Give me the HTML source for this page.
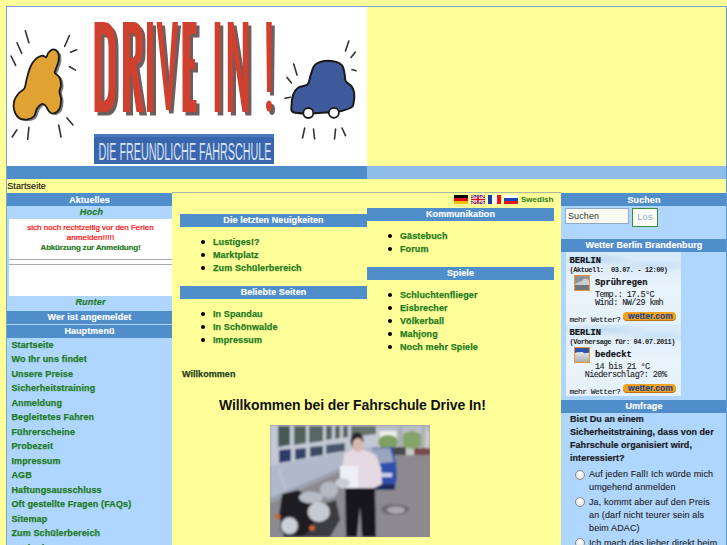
<!DOCTYPE html>
<html><head><meta charset="utf-8"><title>Fahrschule Drive In</title>
<style>
html,body{margin:0;padding:0;background:#ffff99;width:727px;height:545px;overflow:hidden;position:relative}
body>div,body>svg{position:absolute}
.t{white-space:pre}
</style></head><body>
<div style='left:7px;top:7px;width:360px;height:159px;background:#ffffff;'></div>
<svg style="left:0;top:0" width="727" height="180" viewBox="0 0 727 180">
<g stroke="#333" stroke-width="1.6" stroke-linecap="round" fill="none">
<path d="M11,56L15.7,65.3M17,42.7L21.7,53.4M25.3,30.7L28.9,42.7M69.4,35.5L64.7,46.3M70.6,52.2L76.6,49.8M69.4,66.5L75.4,70.1M67,117.9L73,125M58.7,125L61,137M28.9,127.4L27.7,139.3M16.9,129.8L12.2,137"/>
<path d="M293.7,64L297,75M287,77.4L291.5,82.9M285,98.3L290.4,97.2M348.8,41L345.5,51M355.4,52L351,57.5M352,69.6L356,70.7M304.7,128L302.5,138M313.5,129L314.6,139M335.6,129L334.5,139M342,128L345.5,135.7"/>
</g>
<path d="M53.3,49.4C54.9,49.4 57.1,50.7 58.0,52.5C58.9,54.3 59.1,57.4 58.7,60.3C58.3,63.2 56.2,67.6 55.6,69.7C55.0,71.8 54.1,71.5 54.8,72.8C55.4,74.1 58.5,75.4 59.5,77.5C60.5,79.6 61.0,83.0 61.0,85.3C61.0,87.6 59.5,89.2 59.5,91.5C59.5,93.8 61.0,96.4 61.0,99.3C61.0,102.2 60.7,106.3 59.5,108.7C58.3,111.1 55.7,112.9 54.0,113.4C52.3,113.9 50.8,113.1 49.4,111.8C48.0,110.5 46.8,106.9 45.5,105.6C44.2,104.3 43.0,103.5 41.6,104.0C40.2,104.5 38.2,106.6 36.9,108.7C35.6,110.8 35.5,114.7 33.8,116.5C32.1,118.3 29.2,119.3 26.7,119.6C24.2,119.8 21.0,119.6 18.9,118.0C16.8,116.4 15.0,113.0 14.2,110.2C13.4,107.4 13.4,103.8 14.2,100.9C15.0,98.0 17.2,95.1 18.9,93.0C20.6,90.9 23.1,90.7 24.4,88.4C25.7,86.1 25.7,82.7 26.7,79.0C27.7,75.3 29.0,69.9 30.6,66.5C32.2,63.1 34.2,60.5 36.1,58.7C38.0,56.9 40.6,55.9 42.3,55.6C44.0,55.4 45.2,57.7 46.2,57.2C47.2,56.7 47.4,53.8 48.6,52.5C49.8,51.2 51.7,49.4 53.3,49.4Z" fill="#7a7a7a" transform="translate(2.5,1.5)"/>
<path d="M53.3,49.4C54.9,49.4 57.1,50.7 58.0,52.5C58.9,54.3 59.1,57.4 58.7,60.3C58.3,63.2 56.2,67.6 55.6,69.7C55.0,71.8 54.1,71.5 54.8,72.8C55.4,74.1 58.5,75.4 59.5,77.5C60.5,79.6 61.0,83.0 61.0,85.3C61.0,87.6 59.5,89.2 59.5,91.5C59.5,93.8 61.0,96.4 61.0,99.3C61.0,102.2 60.7,106.3 59.5,108.7C58.3,111.1 55.7,112.9 54.0,113.4C52.3,113.9 50.8,113.1 49.4,111.8C48.0,110.5 46.8,106.9 45.5,105.6C44.2,104.3 43.0,103.5 41.6,104.0C40.2,104.5 38.2,106.6 36.9,108.7C35.6,110.8 35.5,114.7 33.8,116.5C32.1,118.3 29.2,119.3 26.7,119.6C24.2,119.8 21.0,119.6 18.9,118.0C16.8,116.4 15.0,113.0 14.2,110.2C13.4,107.4 13.4,103.8 14.2,100.9C15.0,98.0 17.2,95.1 18.9,93.0C20.6,90.9 23.1,90.7 24.4,88.4C25.7,86.1 25.7,82.7 26.7,79.0C27.7,75.3 29.0,69.9 30.6,66.5C32.2,63.1 34.2,60.5 36.1,58.7C38.0,56.9 40.6,55.9 42.3,55.6C44.0,55.4 45.2,57.7 46.2,57.2C47.2,56.7 47.4,53.8 48.6,52.5C49.8,51.2 51.7,49.4 53.3,49.4Z" fill="#e1a234" stroke="#1a1a1a" stroke-width="1.8"/>
<path d="M314.8,65.1C317.1,62.7 320.9,61.6 324.3,61.0C327.7,60.4 332.1,60.8 335.1,61.6C338.1,62.4 340.6,63.6 342.2,65.7C343.8,67.8 344.0,71.5 344.6,74.1C345.2,76.7 344.6,79.1 345.8,81.2C347.0,83.3 350.4,84.6 351.8,86.6C353.2,88.6 353.9,90.5 354.2,93.2C354.5,95.9 354.1,100.3 353.6,102.7C353.1,105.1 353.7,106.0 351.2,107.5C348.7,109.0 342.2,110.8 338.7,111.6C335.2,112.4 334.7,111.9 330.3,112.2C325.9,112.5 318.6,113.4 312.4,113.4C306.2,113.4 296.8,113.6 293.3,112.2C289.8,110.8 291.6,108.1 291.6,105.1C291.6,102.1 292.2,97.2 293.3,94.3C294.4,91.4 295.7,89.5 298.1,87.8C300.5,86.1 305.6,86.3 307.7,84.2C309.8,82.1 309.4,78.5 310.6,75.3C311.8,72.1 312.5,67.5 314.8,65.1Z" fill="#3f5a9a" stroke="#1a1a1a" stroke-width="2"/>
<circle cx="308.3" cy="113" r="5" fill="#fff" stroke="#1a1a1a" stroke-width="1.8"/>
<circle cx="333.9" cy="112.8" r="5" fill="#fff" stroke="#1a1a1a" stroke-width="1.8"/>
<defs><g id="drv" fill-rule="evenodd">
<path d="M94.5,22L104,22Q115.5,22 115.5,46L115.5,88Q115.5,112 104,112L94.5,112ZM101.5,34L103,34Q108.5,34 108.5,48L108.5,88Q108.5,101 103,101L101.5,101Z"/>
<path d="M123,22L133,22Q142.5,22 142.5,38L142.5,50Q142.5,62 136.5,65L144,112L136.5,112L131,74L130,74L130,112L123,112ZM130,33L131.5,33Q135.5,33 135.5,40L135.5,51Q135.5,58 131.5,58L130,58Z"/>
<path d="M147,22L153,22L153,112L147,112Z"/>
<path d="M156.5,22L162,22L168,92L172.5,22L178,22L170.5,110L166,110Z"/>
<path d="M182.5,22L196.5,22L196.5,34L190,34L190,59L195,59L195,69L190,69L190,100L196.5,100L196.5,112L182.5,112Z"/>
<path d="M214.7,22L220.3,22L220.3,112L214.7,112Z"/>
<path d="M227.8,22L233.5,22L242.8,80L242.8,22L248.4,22L248.4,112L242.5,112L233,50L233,112L227.8,112Z"/>
<path d="M266.2,22L271.8,22L271,92L267,92Z"/>
<ellipse cx="269" cy="106" rx="3" ry="5.5"/>
</g></defs>
<use href="#drv" transform="translate(3,3.5)" fill="#6e5e5e"/>
<use href="#drv" fill="#cf402f"/>
<rect x="94" y="134" width="180" height="30" fill="#3a66ae"/><rect x="94" y="134" width="180" height="3" fill="#4a78bc"/>
<text x="98.5" y="159.5" font-family="Liberation Sans" font-size="23" fill="#d8e4f0" textLength="173" lengthAdjust="spacingAndGlyphs">DIE FREUNDLICHE FAHRSCHULE</text>
</svg>

<div style='left:7px;top:166px;width:360px;height:13px;background:#4f8dcb;'></div>
<div style='left:367px;top:166px;width:359px;height:13px;background:#8dbde9;'></div>
<div class='t' style='left:7.3px;top:176px;font:normal normal 9px/20px "Liberation Sans";color:#151515;letter-spacing:0.05px;-webkit-text-stroke:0.15px #151515;'>Startseite</div>
<div style='left:172px;top:192px;width:389px;height:1px;background:#a8b8a8;'></div>
<div style='left:7px;top:193px;width:165px;height:352px;background:#afd6fe;'></div>
<div style='left:7px;top:193px;width:165px;height:13px;background:#4f8dcb;'></div>
<div class='t' style='left:7px;top:189.5px;font:normal bold 9px/20px "Liberation Sans";color:#ffffff;width:165px;text-align:center;letter-spacing:0.08px;-webkit-text-stroke:0.15px #fff;'>Aktuelles</div>
<div class='t' style='left:9px;top:202.2px;font:italic bold 9px/20px "Liberation Sans";color:#1e7b1e;width:165px;text-align:center;letter-spacing:0.3px;-webkit-text-stroke:0.2px #1e7b1e;'>Hoch</div>
<div style='left:9px;top:219px;width:163px;height:77px;background:#ffffff;'></div>
<div class='t' style='left:9px;top:217.5px;font:normal normal 8px/20px "Liberation Sans";color:#ff0000;width:163px;text-align:center;-webkit-text-stroke:0.2px #f00;'>sich noch rechtzeitig vor den Ferien</div>
<div class='t' style='left:9px;top:228px;font:normal normal 8px/20px "Liberation Sans";color:#ff0000;width:163px;text-align:center;letter-spacing:0.1px;-webkit-text-stroke:0.2px #f00;'>anmelden!!!!!</div>
<div class='t' style='left:9px;top:238px;font:normal bold 8px/20px "Liberation Sans";color:#1e7b1e;width:163px;text-align:center;letter-spacing:-0.2px;-webkit-text-stroke:0.2px #1e7b1e;'>Abkürzung zur Anmeldung!</div>
<div style='left:9px;top:259px;width:163px;height:1px;background:#ababab;'></div>
<div style='left:9px;top:264px;width:163px;height:1px;background:#ababab;'></div>
<div class='t' style='left:8px;top:292px;font:italic bold 9px/20px "Liberation Sans";color:#1e7b1e;width:165px;text-align:center;letter-spacing:0.2px;-webkit-text-stroke:0.2px #1e7b1e;'>Runter</div>
<div style='left:7px;top:311px;width:165px;height:13px;background:#4f8dcb;'></div>
<div class='t' style='left:7px;top:307px;font:normal bold 9px/20px "Liberation Sans";color:#ffffff;width:165px;text-align:center;letter-spacing:0.08px;-webkit-text-stroke:0.15px #fff;'>Wer ist angemeldet</div>
<div style='left:7px;top:325px;width:165px;height:13px;background:#4f8dcb;'></div>
<div class='t' style='left:7px;top:321px;font:normal bold 9px/20px "Liberation Sans";color:#ffffff;width:165px;text-align:center;letter-spacing:0.08px;-webkit-text-stroke:0.15px #fff;'>Hauptmenü</div>
<div class='t' style='left:11.5px;top:335px;font:normal bold 9px/20px "Liberation Sans";color:#1e7b1e;letter-spacing:0.12px;-webkit-text-stroke:0.25px #1e7b1e;'>Startseite</div>
<div class='t' style='left:11.5px;top:349px;font:normal bold 9px/20px "Liberation Sans";color:#1e7b1e;letter-spacing:0.12px;-webkit-text-stroke:0.25px #1e7b1e;'>Wo Ihr uns findet</div>
<div class='t' style='left:11.5px;top:364px;font:normal bold 9px/20px "Liberation Sans";color:#1e7b1e;letter-spacing:0.12px;-webkit-text-stroke:0.25px #1e7b1e;'>Unsere Preise</div>
<div class='t' style='left:11.5px;top:378px;font:normal bold 9px/20px "Liberation Sans";color:#1e7b1e;letter-spacing:0.12px;-webkit-text-stroke:0.25px #1e7b1e;'>Sicherheitstraining</div>
<div class='t' style='left:11.5px;top:393px;font:normal bold 9px/20px "Liberation Sans";color:#1e7b1e;letter-spacing:0.12px;-webkit-text-stroke:0.25px #1e7b1e;'>Anmeldung</div>
<div class='t' style='left:11.5px;top:407px;font:normal bold 9px/20px "Liberation Sans";color:#1e7b1e;letter-spacing:0.12px;-webkit-text-stroke:0.25px #1e7b1e;'>Begleitetes Fahren</div>
<div class='t' style='left:11.5px;top:422px;font:normal bold 9px/20px "Liberation Sans";color:#1e7b1e;letter-spacing:0.12px;-webkit-text-stroke:0.25px #1e7b1e;'>Führerscheine</div>
<div class='t' style='left:11.5px;top:436px;font:normal bold 9px/20px "Liberation Sans";color:#1e7b1e;letter-spacing:0.12px;-webkit-text-stroke:0.25px #1e7b1e;'>Probezeit</div>
<div class='t' style='left:11.5px;top:451px;font:normal bold 9px/20px "Liberation Sans";color:#1e7b1e;letter-spacing:0.12px;-webkit-text-stroke:0.25px #1e7b1e;'>Impressum</div>
<div class='t' style='left:11.5px;top:465px;font:normal bold 9px/20px "Liberation Sans";color:#1e7b1e;letter-spacing:0.12px;-webkit-text-stroke:0.25px #1e7b1e;'>AGB</div>
<div class='t' style='left:11.5px;top:480px;font:normal bold 9px/20px "Liberation Sans";color:#1e7b1e;letter-spacing:0.12px;-webkit-text-stroke:0.25px #1e7b1e;'>Haftungsausschluss</div>
<div class='t' style='left:11.5px;top:494px;font:normal bold 9px/20px "Liberation Sans";color:#1e7b1e;letter-spacing:0.12px;-webkit-text-stroke:0.25px #1e7b1e;'>Oft gestellte Fragen (FAQs)</div>
<div class='t' style='left:11.5px;top:509px;font:normal bold 9px/20px "Liberation Sans";color:#1e7b1e;letter-spacing:0.12px;-webkit-text-stroke:0.25px #1e7b1e;'>Sitemap</div>
<div class='t' style='left:11.5px;top:523px;font:normal bold 9px/20px "Liberation Sans";color:#1e7b1e;letter-spacing:0.12px;-webkit-text-stroke:0.25px #1e7b1e;'>Zum Schülerbereich</div>
<div class='t' style='left:11.5px;top:538px;font:normal bold 9px/20px "Liberation Sans";color:#1e7b1e;letter-spacing:0.12px;-webkit-text-stroke:0.25px #1e7b1e;'>Marktplatz</div>
<div style="left:454px;top:195px;width:14px;height:9px;background:linear-gradient(#000 0 33%,#e01010 33% 66%,#f0c000 66%)"></div>
<svg style="left:471px;top:195px" width="14" height="9" viewBox="0 0 14 9"><rect width="14" height="9" fill="#243a8a"/><path d="M0,0L14,9M14,0L0,9" stroke="#fff" stroke-width="2"/><path d="M0,0L14,9M14,0L0,9" stroke="#d01020" stroke-width="0.8"/><path d="M7,0V9M0,4.5H14" stroke="#fff" stroke-width="3"/><path d="M7,0V9M0,4.5H14" stroke="#d01020" stroke-width="1.6"/></svg>
<div style="left:488px;top:195px;width:13px;height:9px;background:linear-gradient(90deg,#1a3ea8 0 33%,#fff 33% 66%,#ee1020 66%)"></div>
<div style="left:504px;top:195px;width:14px;height:9px;background:linear-gradient(#fff 0 33%,#1a44b8 33% 66%,#e01818 66%)"></div>

<div class='t' style='left:521px;top:190px;font:normal bold 8px/20px "Liberation Sans";color:#1e7b1e;'>Swedish</div>
<div style='left:180px;top:214px;width:187px;height:13px;background:#4f8dcb;'></div>
<div class='t' style='left:180px;top:210px;font:normal bold 9px/20px "Liberation Sans";color:#ffffff;width:187px;text-align:center;letter-spacing:0.08px;-webkit-text-stroke:0.15px #fff;'>Die letzten Neuigkeiten</div>
<div style='left:200.5px;top:239.5px;width:4px;height:4px;border-radius:50%;background:#000'></div>
<div class='t' style='left:213px;top:232px;font:normal bold 9px/20px "Liberation Sans";color:#1e7b1e;letter-spacing:0.12px;-webkit-text-stroke:0.25px #1e7b1e;'>Lustiges!?</div>
<div style='left:200.5px;top:252.5px;width:4px;height:4px;border-radius:50%;background:#000'></div>
<div class='t' style='left:213px;top:245px;font:normal bold 9px/20px "Liberation Sans";color:#1e7b1e;letter-spacing:0.12px;-webkit-text-stroke:0.25px #1e7b1e;'>Marktplatz</div>
<div style='left:200.5px;top:265.5px;width:4px;height:4px;border-radius:50%;background:#000'></div>
<div class='t' style='left:213px;top:258px;font:normal bold 9px/20px "Liberation Sans";color:#1e7b1e;letter-spacing:0.12px;-webkit-text-stroke:0.25px #1e7b1e;'>Zum Schülerbereich</div>
<div style='left:180px;top:286px;width:187px;height:13px;background:#4f8dcb;'></div>
<div class='t' style='left:180px;top:282px;font:normal bold 9px/20px "Liberation Sans";color:#ffffff;width:187px;text-align:center;letter-spacing:0.08px;-webkit-text-stroke:0.15px #fff;'>Beliebte Seiten</div>
<div style='left:200.5px;top:311.5px;width:4px;height:4px;border-radius:50%;background:#000'></div>
<div class='t' style='left:213px;top:304px;font:normal bold 9px/20px "Liberation Sans";color:#1e7b1e;letter-spacing:0.12px;-webkit-text-stroke:0.25px #1e7b1e;'>In Spandau</div>
<div style='left:200.5px;top:324.5px;width:4px;height:4px;border-radius:50%;background:#000'></div>
<div class='t' style='left:213px;top:317px;font:normal bold 9px/20px "Liberation Sans";color:#1e7b1e;letter-spacing:0.12px;-webkit-text-stroke:0.25px #1e7b1e;'>In Schönwalde</div>
<div style='left:200.5px;top:337.5px;width:4px;height:4px;border-radius:50%;background:#000'></div>
<div class='t' style='left:213px;top:330px;font:normal bold 9px/20px "Liberation Sans";color:#1e7b1e;letter-spacing:0.12px;-webkit-text-stroke:0.25px #1e7b1e;'>Impressum</div>
<div style='left:367px;top:208px;width:187px;height:13px;background:#4f8dcb;'></div>
<div class='t' style='left:367px;top:204px;font:normal bold 9px/20px "Liberation Sans";color:#ffffff;width:187px;text-align:center;letter-spacing:0.08px;-webkit-text-stroke:0.15px #fff;'>Kommunikation</div>
<div style='left:387.5px;top:233.5px;width:4px;height:4px;border-radius:50%;background:#000'></div>
<div class='t' style='left:400px;top:226px;font:normal bold 9px/20px "Liberation Sans";color:#1e7b1e;letter-spacing:0.12px;-webkit-text-stroke:0.25px #1e7b1e;'>Gästebuch</div>
<div style='left:387.5px;top:246.5px;width:4px;height:4px;border-radius:50%;background:#000'></div>
<div class='t' style='left:400px;top:239px;font:normal bold 9px/20px "Liberation Sans";color:#1e7b1e;letter-spacing:0.12px;-webkit-text-stroke:0.25px #1e7b1e;'>Forum</div>
<div style='left:367px;top:267px;width:187px;height:13px;background:#4f8dcb;'></div>
<div class='t' style='left:367px;top:263px;font:normal bold 9px/20px "Liberation Sans";color:#ffffff;width:187px;text-align:center;letter-spacing:0.08px;-webkit-text-stroke:0.15px #fff;'>Spiele</div>
<div style='left:387.5px;top:292.5px;width:4px;height:4px;border-radius:50%;background:#000'></div>
<div class='t' style='left:400px;top:285px;font:normal bold 9px/20px "Liberation Sans";color:#1e7b1e;letter-spacing:0.12px;-webkit-text-stroke:0.25px #1e7b1e;'>Schluchtenflieger</div>
<div style='left:387.5px;top:305.5px;width:4px;height:4px;border-radius:50%;background:#000'></div>
<div class='t' style='left:400px;top:298px;font:normal bold 9px/20px "Liberation Sans";color:#1e7b1e;letter-spacing:0.12px;-webkit-text-stroke:0.25px #1e7b1e;'>Eisbrecher</div>
<div style='left:387.5px;top:318.5px;width:4px;height:4px;border-radius:50%;background:#000'></div>
<div class='t' style='left:400px;top:311px;font:normal bold 9px/20px "Liberation Sans";color:#1e7b1e;letter-spacing:0.12px;-webkit-text-stroke:0.25px #1e7b1e;'>Völkerball</div>
<div style='left:387.5px;top:331.5px;width:4px;height:4px;border-radius:50%;background:#000'></div>
<div class='t' style='left:400px;top:324px;font:normal bold 9px/20px "Liberation Sans";color:#1e7b1e;letter-spacing:0.12px;-webkit-text-stroke:0.25px #1e7b1e;'>Mahjong</div>
<div style='left:387.5px;top:344.5px;width:4px;height:4px;border-radius:50%;background:#000'></div>
<div class='t' style='left:400px;top:337px;font:normal bold 9px/20px "Liberation Sans";color:#1e7b1e;letter-spacing:0.12px;-webkit-text-stroke:0.25px #1e7b1e;'>Noch mehr Spiele</div>
<div class='t' style='left:182px;top:363.5px;font:normal bold 9px/20px "Liberation Sans";color:#1c3e1c;letter-spacing:0.05px;-webkit-text-stroke:0.25px #1c3e1c;'>Willkommen</div>
<div class='t' style='left:219px;top:394.5px;font:normal bold 14px/20px "Liberation Sans";color:#111;letter-spacing:-0.1px;'>Willkommen bei der Fahrschule Drive In!</div>
<svg style="left:270px;top:425px" width="160" height="112" viewBox="270 425 160 112">
<defs><filter id="pb" x="0" y="0" width="1" height="1"><feGaussianBlur stdDeviation="0.8"/></filter><clipPath id="pc"><rect x="270" y="425" width="160" height="112"/></clipPath></defs><g clip-path="url(#pc)"><g filter="url(#pb)">
<rect x="260" y="415" width="180" height="132" fill="#8b8a90"/>
<!-- far background right -->
<rect x="376" y="425" width="54" height="30" fill="#c9ccc8"/>
<rect x="376" y="425" width="54" height="6" fill="#b8bcc4"/>
<rect x="380" y="431" width="16" height="9" fill="#eef0ee"/>
<ellipse cx="388" cy="442" rx="10" ry="7" fill="#7ea060"/>
<ellipse cx="412" cy="440" rx="12" ry="9" fill="#86a46a"/>
<rect x="398" y="426" width="5" height="24" fill="#aab0b8"/>
<rect x="421" y="426" width="4" height="24" fill="#aab0b8"/>
<rect x="392" y="447" width="14" height="11" fill="#4a4650" rx="2"/>
<rect x="414" y="448" width="16" height="8" fill="#7a4a48" rx="2"/>
<rect x="376" y="455" width="54" height="82" fill="#8c8a8e"/>
<!-- building -->
<polygon points="270,425 378,425 378,450 345,466 270,500" fill="#c2c8d4"/>
<polygon points="278,426 290,426 290,445 278,447" fill="#4a5854"/>
<polygon points="294,426 306,426 306,443 294,445" fill="#52625a"/>
<polygon points="309,426 323,426 323,441 309,443" fill="#566660"/>
<polygon points="326,426 332,426 332,439 326,440" fill="#56625c"/>
<polygon points="335,426 340,426 340,438 335,439" fill="#58665e"/>
<polygon points="343,426 348,426 348,437 343,438" fill="#58665e"/>
<polygon points="351,426 376,426 376,434 351,437" fill="#66726c"/>
<polygon points="279,450 291,449 291,461 279,463" fill="#2c3a6c"/>
<polygon points="295,449 306,448 306,458 295,460" fill="#34426c"/>
<polygon points="310,447 323,446 323,455 310,457" fill="#3c4a60"/>
<polygon points="326,445 345,443 345,451 326,454" fill="#48546a"/>
<polygon points="270,466 345,452 376,446 376,452 345,466 270,498" fill="#b0b8ca"/>
<polygon points="270,498 345,466 376,452 376,456 345,470 270,503" fill="#9aa0ac"/>
<!-- blue car -->
<polygon points="372,448 392,447 396,462 397,478 394,490 372,490" fill="#2f50ac"/>
<polygon points="372,449 390,448 394,462 372,464" fill="#9aa6c0"/>
<rect x="380" y="473" width="12" height="4" fill="#c8d2ec"/>
<rect x="372" y="484" width="23" height="6" fill="#1e2c60"/>
<!-- manhole -->
<ellipse cx="395" cy="509.5" rx="14" ry="5.5" fill="#6c6a70"/>
<ellipse cx="396" cy="510" rx="9" ry="3.8" fill="#a8a6aa"/>
<!-- person -->
<polygon points="344,454 352,450 364,450 376,455 381,468 382,484 372,489 346,489 342,470" fill="#e6dae2"/>
<ellipse cx="357" cy="441" rx="6.5" ry="8.5" fill="#2a2222"/>
<ellipse cx="358" cy="445" rx="5.5" ry="7" fill="#d6b8b0"/>
<polygon points="340,466 358,466 358,488 340,488" fill="#eef0f6"/>
<polygon points="345,488 375,488 376,537 362,537 360,505 357,537 346,537" fill="#16161e"/>
<!-- motorcycle -->
<polygon points="300,512 336,500 340,520 330,537 300,537" fill="#3a3a42"/>
<polygon points="282,494 298,490 312,500 316,515 312,530 300,537 284,537 279,515" fill="#1e1e24"/>
<ellipse cx="311" cy="497.6" rx="12" ry="6" fill="#b8bcc6"/>
<ellipse cx="329" cy="490" rx="9" ry="8.5" fill="#b4b8c2"/>
<ellipse cx="342.5" cy="483" rx="7.5" ry="4.5" fill="#c8ccd4"/>
<ellipse cx="318.8" cy="512" rx="11" ry="10" fill="#c6cad2"/>
<line x1="279" y1="469" x2="286" y2="490" stroke="#c0c4ca" stroke-width="2"/>
<circle cx="289.4" cy="525.8" r="9" fill="#ccd0d8" stroke="#4a4a50" stroke-width="1.5"/>
<circle cx="277.5" cy="516.5" r="2.8" fill="#c86a30"/>
<circle cx="312" cy="528" r="2.8" fill="#c86a30"/>
</g></g></svg>

<div style='left:561px;top:193px;width:166px;height:352px;background:#afd6fe;'></div>
<div style='left:561px;top:193px;width:166px;height:13px;background:#4f8dcb;'></div>
<div class='t' style='left:561px;top:189.5px;font:normal bold 9px/20px "Liberation Sans";color:#ffffff;width:166px;text-align:center;letter-spacing:0.08px;-webkit-text-stroke:0.15px #fff;'>Suchen</div>
<div style='left:565px;top:208px;width:62px;height:14px;border:1px solid #8fa8c8;background:#fbfbf3'></div>
<div class='t' style='left:568px;top:206.2px;font:normal normal 9px/20px "Liberation Sans";color:#333;letter-spacing:0.1px;'>Suchen</div>
<div style='left:632px;top:208px;width:24px;height:17px;border:1px solid #3c8c3c;background:#fbfbf3'></div>
<div class='t' style='left:632px;top:206.6px;font:normal normal 9px/20px "Liberation Sans";color:#88acd0;width:26px;text-align:center;letter-spacing:0.3px;'>Los</div>
<div style='left:561px;top:239px;width:166px;height:13px;background:#4f8dcb;'></div>
<div class='t' style='left:561px;top:235px;font:normal bold 9px/20px "Liberation Sans";color:#ffffff;width:166px;text-align:center;letter-spacing:0.08px;-webkit-text-stroke:0.15px #fff;'>Wetter Berlin Brandenburg</div>
<div style="left:566px;top:252px;width:115px;height:144px;background:radial-gradient(ellipse 40px 6px at 30px 8px,rgba(170,205,240,.6),transparent),radial-gradient(ellipse 50px 7px at 90px 14px,rgba(175,210,240,.5),transparent),radial-gradient(ellipse 45px 6px at 40px 78px,rgba(170,205,240,.5),transparent),radial-gradient(ellipse 50px 7px at 95px 84px,rgba(175,210,240,.45),transparent),linear-gradient(180deg,#d6e8f8,#eaf4fc 25%,#e4f0fa 50%,#d8eaf8 51%,#eaf4fc 75%,#e4f0fa)"></div>

<div class='t' style='left:569.5px;top:250.89999999999998px;font:normal bold 8.75px/20px "Liberation Mono";color:#111;-webkit-text-stroke:0.2px #111;'>BERLIN</div>
<div class='t' style='left:569.5px;top:260px;font:normal bold 7px/20px "Liberation Mono";color:#222;letter-spacing:-0.43px;'>(Aktuell:  03.07. - 12:00)</div>
<svg style='left:574px;top:275px' width='16' height='16' viewBox='0 0 16 16'><rect x='0.5' y='0.5' width='15' height='15' fill='#8a929c' stroke='#ec942c'/><path d='M1,9 C4,8 6,6 8,6 C9,4 11,3 13,4 C14,4 15,5 15,6 L15,10 L1,10Z' fill='#c9cdd3'/><rect x='1' y='10' width='14' height='5' fill='#6e7682'/></svg>
<div class='t' style='left:595px;top:273.2px;font:normal bold 8.75px/20px "Liberation Mono";color:#111;-webkit-text-stroke:0.2px #111;'>Sprühregen</div>
<div class='t' style='left:595px;top:284.8px;font:normal normal 8.5px/20px "Liberation Mono";color:#222;letter-spacing:-0.56px;-webkit-text-stroke:0.1px #222;'>Temp.: 17.5°C</div>
<div class='t' style='left:595px;top:293.4px;font:normal normal 8.5px/20px "Liberation Mono";color:#222;letter-spacing:-0.56px;-webkit-text-stroke:0.1px #222;'>Wind: NW/29 kmh</div>
<div class='t' style='left:569.5px;top:310.2px;font:normal normal 8px/20px "Liberation Mono";color:#222;letter-spacing:-0.57px;-webkit-text-stroke:0.1px #222;'>mehr Wetter?</div>
<div style='left:623px;top:312px;width:53px;height:8px;border-radius:4px;background:#f2a31e;box-shadow:0 1px 0 #c07010'></div>
<div class='t' style='left:624px;top:306.2px;font:normal bold 8.5px/20px "Liberation Sans";color:#23448e;width:53px;text-align:center;letter-spacing:0.05px;-webkit-text-stroke:0.15px #23448e;'>wetter.com</div>
<div class='t' style='left:569.5px;top:322.9px;font:normal bold 8.75px/20px "Liberation Mono";color:#111;-webkit-text-stroke:0.2px #111;'>BERLIN</div>
<div class='t' style='left:569.5px;top:332px;font:normal bold 7px/20px "Liberation Mono";color:#222;letter-spacing:-0.43px;'>(Vorhersage für: 04.07.2011)</div>
<svg style='left:574px;top:347px' width='16' height='16' viewBox='0 0 16 16'><defs><linearGradient id='cg347' x1='0' y1='0' x2='0' y2='1'><stop offset='0' stop-color='#ffffff'/><stop offset='1' stop-color='#a8acb2'/></linearGradient></defs><rect x='0.5' y='0.5' width='15' height='15' fill='url(#cg347)' stroke='#ec942c'/><path d='M1,1 H15 V6 C13,5 12,7 10,6 C8,4 6,6 4,5 C3,5 2,6 1,6Z' fill='#2a54b0'/></svg>
<div class='t' style='left:595px;top:345.2px;font:normal bold 8.75px/20px "Liberation Mono";color:#111;-webkit-text-stroke:0.2px #111;'>bedeckt</div>
<div class='t' style='left:595px;top:356.8px;font:normal normal 8.5px/20px "Liberation Mono";color:#222;letter-spacing:-0.56px;-webkit-text-stroke:0.1px #222;'>14 bis 21 °C</div>
<div class='t' style='left:584.7px;top:365.4px;font:normal normal 8.5px/20px "Liberation Mono";color:#222;letter-spacing:-0.56px;-webkit-text-stroke:0.1px #222;'>Niederschlag?: 20%</div>
<div class='t' style='left:569.5px;top:382.2px;font:normal normal 8px/20px "Liberation Mono";color:#222;letter-spacing:-0.57px;-webkit-text-stroke:0.1px #222;'>mehr Wetter?</div>
<div style='left:623px;top:384px;width:53px;height:8px;border-radius:4px;background:#f2a31e;box-shadow:0 1px 0 #c07010'></div>
<div class='t' style='left:624px;top:378.2px;font:normal bold 8.5px/20px "Liberation Sans";color:#23448e;width:53px;text-align:center;letter-spacing:0.05px;-webkit-text-stroke:0.15px #23448e;'>wetter.com</div>
<div style='left:561px;top:400px;width:166px;height:13px;background:#4f8dcb;'></div>
<div class='t' style='left:561px;top:396px;font:normal bold 9px/20px "Liberation Sans";color:#ffffff;width:166px;text-align:center;letter-spacing:0.08px;-webkit-text-stroke:0.15px #fff;'>Umfrage</div>
<div class='t' style='left:570px;top:409px;font:normal bold 9px/20px "Liberation Sans";color:#1a1a1a;letter-spacing:0.05px;-webkit-text-stroke:0.2px #1a1a1a;'>Bist Du an einem</div>
<div class='t' style='left:570px;top:422px;font:normal bold 9px/20px "Liberation Sans";color:#1a1a1a;letter-spacing:0.05px;-webkit-text-stroke:0.2px #1a1a1a;'>Sicherheitstraining, dass von der</div>
<div class='t' style='left:570px;top:435px;font:normal bold 9px/20px "Liberation Sans";color:#1a1a1a;letter-spacing:0.05px;-webkit-text-stroke:0.2px #1a1a1a;'>Fahrschule organisiert wird,</div>
<div class='t' style='left:570px;top:448px;font:normal bold 9px/20px "Liberation Sans";color:#1a1a1a;letter-spacing:0.05px;-webkit-text-stroke:0.2px #1a1a1a;'>interessiert?</div>
<div style='left:575px;top:470px;width:8px;height:8px;border:1px solid #8a8a8a;border-radius:50%;background:radial-gradient(circle at 50% 35%,#fff,#ddd)'></div>
<div class='t' style='left:589px;top:464px;font:normal normal 9px/20px "Liberation Sans";color:#222;letter-spacing:0.12px;-webkit-text-stroke:0.1px #222;'>Auf jeden Fall! Ich würde mich</div>
<div class='t' style='left:589px;top:477px;font:normal normal 9px/20px "Liberation Sans";color:#222;letter-spacing:0.12px;-webkit-text-stroke:0.1px #222;'>umgehend anmelden</div>
<div style='left:575px;top:497px;width:8px;height:8px;border:1px solid #8a8a8a;border-radius:50%;background:radial-gradient(circle at 50% 35%,#fff,#ddd)'></div>
<div class='t' style='left:589px;top:492px;font:normal normal 9px/20px "Liberation Sans";color:#222;letter-spacing:0.12px;-webkit-text-stroke:0.1px #222;'>Ja, kommt aber auf den Preis</div>
<div class='t' style='left:589px;top:505px;font:normal normal 9px/20px "Liberation Sans";color:#222;letter-spacing:0.12px;-webkit-text-stroke:0.1px #222;'>an (darf nicht teurer sein als</div>
<div class='t' style='left:589px;top:518px;font:normal normal 9px/20px "Liberation Sans";color:#222;letter-spacing:0.12px;-webkit-text-stroke:0.1px #222;'>beim ADAC)</div>
<div style='left:575px;top:538px;width:8px;height:8px;border:1px solid #8a8a8a;border-radius:50%;background:radial-gradient(circle at 50% 35%,#fff,#ddd)'></div>
<div class='t' style='left:589px;top:533px;font:normal normal 9px/20px "Liberation Sans";color:#222;letter-spacing:0.12px;-webkit-text-stroke:0.1px #222;'>Ich mach das lieber direkt beim</div>
<div style='left:6px;top:6px;width:721px;height:1px;background:#76a4d4;'></div>
<div style='left:6px;top:6px;width:1px;height:539px;background:#76a4d4;'></div>
<div style='left:726px;top:6px;width:1px;height:539px;background:#5f97d0;'></div>
</body></html>
